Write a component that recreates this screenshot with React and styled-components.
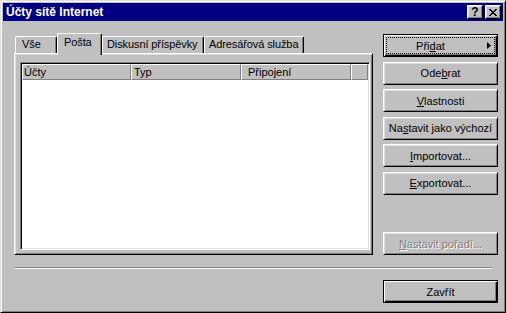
import React from "react";
import styled, { createGlobalStyle } from "styled-components";

const GlobalStyle = createGlobalStyle`
  html, body {
    margin: 0;
    padding: 0;
    background: #c0c0c0;
  }
  body {
    font-family: "Liberation Sans", Arial, sans-serif;
    font-size: 11px;
    color: #000;
  }
`;

const Window = styled.div`
  width: 506px;
  height: 313px;
  box-sizing: border-box;
  background: #c0c0c0;
  border: 1px solid;
  border-color: #dfdfdf #000 #000 #dfdfdf;
  box-shadow: inset 1px 1px #fff, inset -1px -1px #808080;
  padding: 2px;
  display: flex;
  flex-direction: column;
`;

const TitleBar = styled.div`
  height: 18px;
  background: #000080;
  display: flex;
  align-items: center;
  padding: 0 2px 0 3px;
  color: #fff;
  font-weight: bold;
  font-size: 12px;
  line-height: 14px;
`;

const Title = styled.span`
  flex: 1;
`;

const TitleButton = styled.button`
  width: 16px;
  height: 14px;
  box-sizing: border-box;
  padding: 0;
  margin-left: ${(p) => p.$gap}px;
  background: #c0c0c0;
  border: 1px solid;
  border-color: #fff #000 #000 #fff;
  box-shadow: inset -1px -1px #808080, inset 1px 1px #dfdfdf;
  display: flex;
  align-items: center;
  justify-content: center;
  font-family: "Liberation Sans", Arial, sans-serif;
  font-weight: bold;
  font-size: 12px;
  line-height: 11px;
  color: #000;
`;

const Body = styled.div`
  padding: 12px 0 0 11px;
  display: flex;
  flex-direction: column;
`;

const MainRow = styled.div`
  display: flex;
  height: 222px;
  gap: 10px;
`;

const TabArea = styled.div`
  width: 359px;
  display: flex;
  flex-direction: column;
`;

const TabStrip = styled.div`
  height: 20px;
  display: flex;
  align-items: flex-start;
  padding-left: 1px;
`;

const Tab = styled.div`
  box-sizing: border-box;
  width: ${(p) => p.$w}px;
  height: ${(p) => (p.$active ? 22 : 17)}px;
  margin-top: ${(p) => (p.$active ? 0 : 3)}px;
  padding: ${(p) => (p.$active ? "1px" : "0")} 0 0 ${(p) => p.$pad}px;
  background: #c0c0c0;
  border-top: 1px solid #fff;
  border-left: 1px solid #fff;
  border-right: 1px solid #000;
  border-radius: 2px 2px 0 0;
  box-shadow: inset -1px 0 #808080;
  line-height: 14px;
  white-space: nowrap;
  letter-spacing: -0.1px;
  z-index: ${(p) => (p.$active ? 1 : 0)};
`;

const Panel = styled.div`
  flex: 1;
  box-sizing: border-box;
  border: 1px solid;
  border-color: #fff #000 #000 #fff;
  box-shadow: inset 1px 1px #dfdfdf, inset -1px -1px #808080;
  padding: 8px 0 0 5px;
`;

const ListView = styled.div`
  width: 350px;
  height: 188px;
  box-sizing: border-box;
  background: #fff;
  border: 1px solid;
  border-color: #808080 #fff #fff #808080;
  box-shadow: inset 1px 1px #000, inset -1px -1px #dfdfdf;
  padding: 1px;
`;

const Header = styled.div`
  display: flex;
  height: 16px;
`;

const HeaderCell = styled.div`
  box-sizing: border-box;
  width: ${(p) => (p.$w ? `${p.$w}px` : "auto")};
  flex: ${(p) => (p.$w ? "none" : 1)};
  height: 16px;
  background: #c0c0c0;
  border: 1px solid;
  border-color: #fff #808080 #808080 #fff;
  padding-left: ${(p) => p.$pad}px;
  line-height: 14px;
  white-space: nowrap;
`;

const ButtonColumn = styled.div`
  width: 115px;
  margin-top: 1px;
  display: flex;
  flex-direction: column;
  gap: 4.6px;
`;

const Button = styled.button`
  position: relative;
  width: 115px;
  height: 23px;
  flex: none;
  box-sizing: border-box;
  margin: 0;
  margin-top: ${(p) => (p.$push ? "auto" : "0")};
  padding: 0 ${(p) => (p.$menu ? 20 : 0)}px 0 0;
  background: #c0c0c0;
  font-family: "Liberation Sans", Arial, sans-serif;
  font-size: 11px;
  line-height: 14px;
  color: ${(p) => (p.disabled ? "#808080" : "#000")};
  text-shadow: ${(p) => (p.disabled ? "1px 1px #fff" : "none")};
  border: 1px solid;
  border-color: ${(p) => (p.$default ? "#000" : "#fff #000 #000 #fff")};
  box-shadow: ${(p) =>
    p.$default
      ? "inset 1px 1px #fff, inset -1px -1px #000, inset -2px -2px #808080"
      : "inset 1px 1px #dfdfdf, inset -1px -1px #808080"};

  ${(p) =>
    p.$focus &&
    `
    &::after {
      content: "";
      position: absolute;
      inset: 2px;
      border: 1px dotted #000;
    }
  `}
`;

const Arrow = styled.svg`
  position: absolute;
  right: 6px;
  top: 7px;
`;

const Separator = styled.div`
  width: 478px;
  height: 0;
  margin-top: 12px;
  border-top: 1px solid #808080;
  border-bottom: 1px solid #fff;
`;

const BottomRow = styled.div`
  width: 484px;
  margin-top: 11px;
  display: flex;
  justify-content: flex-end;
`;

const CloseGlyph = () => (
  <svg width="8" height="7" viewBox="0 0 8 7" shapeRendering="crispEdges">
    <path
      d="M0 0h2v1h-2zM6 0h2v1h-2zM1 1h2v1h-2zM5 1h2v1h-2zM2 2h4v1h-4zM3 3h2v1h-2zM2 4h4v1h-4zM1 5h2v1h-2zM5 5h2v1h-2zM0 6h2v1h-2zM6 6h2v1h-2z"
      fill="#000"
    />
  </svg>
);

const tabs = [
  { label: "Vše", w: 42, pad: 6 },
  { label: "Pošta", w: 45, pad: 6, active: true },
  { label: "Diskusní příspěvky", w: 102, pad: 4 },
  { label: "Adresářová služba", w: 100, pad: 4 },
];

const App = () => (
  <>
    <GlobalStyle />
    <Window>
      <TitleBar>
        <Title>Účty sítě Internet</Title>
        <TitleButton $gap={0}>?</TitleButton>
        <TitleButton $gap={2}>
          <CloseGlyph />
        </TitleButton>
      </TitleBar>
      <Body>
        <MainRow>
          <TabArea>
            <TabStrip>
              {tabs.map((t) => (
                <Tab key={t.label} $w={t.w} $active={t.active} $pad={t.pad}>
                  {t.label}
                </Tab>
              ))}
            </TabStrip>
            <Panel>
              <ListView>
                <Header>
                  <HeaderCell $w={109} $pad={1}>Účty</HeaderCell>
                  <HeaderCell $w={110} $pad={2}>Typ</HeaderCell>
                  <HeaderCell $w={110} $pad={6}>Připojení</HeaderCell>
                  <HeaderCell />
                </Header>
              </ListView>
            </Panel>
          </TabArea>
          <ButtonColumn>
            <Button $default $focus $menu>
              Při<u>d</u>at
              <Arrow width="4" height="7" viewBox="0 0 4 7">
                <path d="M0 0L4 3.5L0 7Z" fill="#000" />
              </Arrow>
            </Button>
            <Button>
              Ode<u>b</u>rat
            </Button>
            <Button>
              <u>V</u>lastnosti
            </Button>
            <Button>
              Na<u>s</u>tavit jako výchozí
            </Button>
            <Button>
              <u>I</u>mportovat...
            </Button>
            <Button>
              <u>E</u>xportovat...
            </Button>
            <Button $push disabled>
              <u>N</u>astavit pořadí...
            </Button>
          </ButtonColumn>
        </MainRow>
        <Separator />
        <BottomRow>
          <Button $default>Zavřít</Button>
        </BottomRow>
      </Body>
    </Window>
  </>
);

export default App;
